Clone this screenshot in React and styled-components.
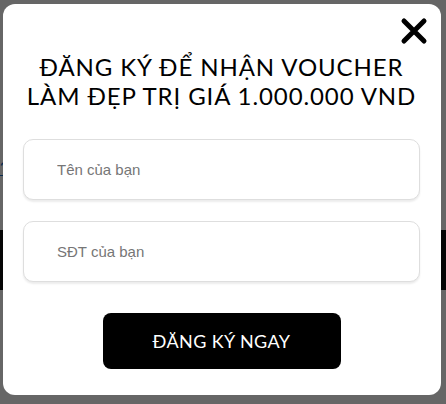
import React from 'react';
import styled, { createGlobalStyle } from 'styled-components';

const GlobalStyle = createGlobalStyle`
    html, body {
        margin: 0;
        padding: 0;
    }
    body {
        width: 446px;
        height: 404px;
        overflow: hidden;
        background: #ffffff;
        font-family: "Liberation Sans", Arial, sans-serif;
    }
`;

const Page = styled.div`
    position: relative;
    width: 446px;
    height: 404px;
    display: flex;
    flex-direction: column;
`;

const PageLink = styled.div`
    margin-top: 160px;
    height: 18px;
    width: 8px;
    color: #1a6fc9;
    font-size: 16px;
    line-height: 18px;
    overflow: hidden;
    text-decoration: underline;
`;

const DarkBand = styled.div`
    margin-top: 52px;
    height: 60px;
    background: #0d0d0d;
`;

const Overlay = styled.div`
    position: absolute;
    inset: 0;
    background: rgba(0, 0, 0, 0.6);
    display: flex;
    align-items: flex-start;
    justify-content: flex-start;
    padding: 4px 0 0 3px;
`;

const Modal = styled.div`
    position: relative;
    width: 438px;
    height: 391px;
    box-sizing: border-box;
    background: #ffffff;
    border-radius: 12px;
    padding: 48px 21px 0 20px;
    display: flex;
    flex-direction: column;
`;

const Close = styled.button`
    position: absolute;
    top: 13px;
    right: 13px;
    width: 28px;
    height: 28px;
    padding: 0;
    border: none;
    background: none;
    cursor: pointer;
    svg {
        display: block;
    }
`;

const Title = styled.h2`
    margin: 0;
    text-align: center;
    font-family: "Lato", sans-serif;
    font-weight: 400;
    font-size: 24px;
    line-height: 29px;
    letter-spacing: 0.9px;
    color: #000000;
`;

const Form = styled.form`
    margin-top: 29px;
    display: flex;
    flex-direction: column;
    gap: 21px;
`;

const Field = styled.input`
    height: 61px;
    box-sizing: border-box;
    border: 1px solid #dedede;
    border-radius: 10px;
    box-shadow: 0 2px 2px rgba(0, 0, 0, 0.08);
    padding: 0 33px;
    font-family: "Liberation Sans", Arial, sans-serif;
    font-size: 15px;
    color: #333;
    outline: none;
    &::placeholder {
        color: #767676;
    }
`;

const Submit = styled.button`
    align-self: center;
    margin-top: 10px;
    width: 238px;
    height: 56px;
    border: none;
    border-radius: 8px;
    background: #000000;
    color: #ffffff;
    font-family: "Lato", sans-serif;
    font-size: 18px;
    letter-spacing: 0.4px;
    cursor: pointer;
`;

export default function App() {
    return (
        <>
            <GlobalStyle />
            <Page>
                <PageLink>?</PageLink>
                <DarkBand />
                <Overlay>
                    <Modal>
                        <Close aria-label="Đóng">
                            <svg width="28" height="28" viewBox="0 0 28 28">
                                <path d="M4 4 L24 24 M24 4 L4 24" stroke="#000" strokeWidth="5" strokeLinecap="round" />
                            </svg>
                        </Close>
                        <Title>
                            ĐĂNG KÝ ĐỂ NHẬN VOUCHER
                            <br />
                            LÀM ĐẸP TRỊ GIÁ 1.000.000 VND
                        </Title>
                        <Form onSubmit={(e) => e.preventDefault()}>
                            <Field type="text" placeholder="Tên của bạn" />
                            <Field type="tel" placeholder="SĐT của bạn" />
                            <Submit type="submit">ĐĂNG KÝ NGAY</Submit>
                        </Form>
                    </Modal>
                </Overlay>
            </Page>
        </>
    );
}
